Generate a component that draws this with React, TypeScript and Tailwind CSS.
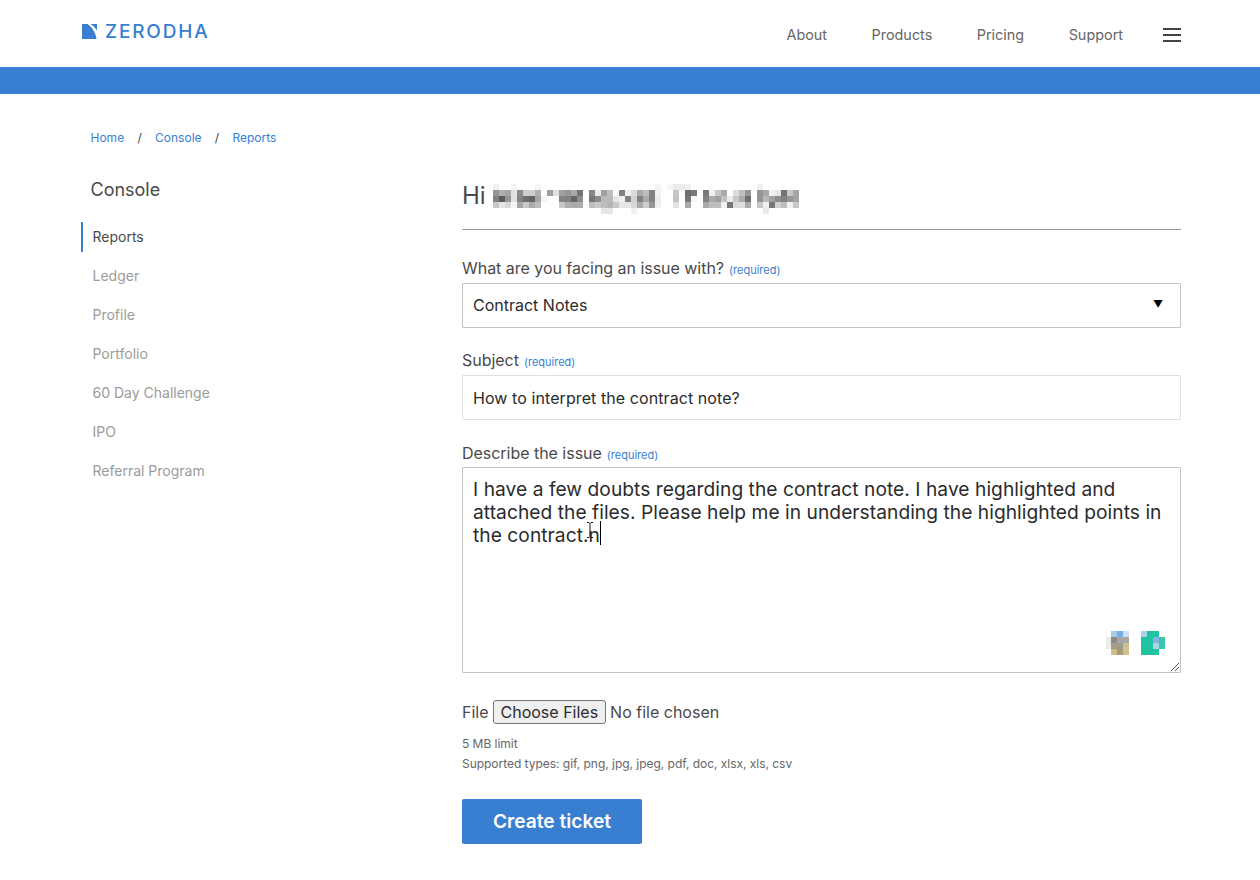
const sideLinks = ['Ledger', 'Profile', 'Portfolio', '60 Day Challenge', 'IPO', 'Referral Program']
const navLinks = ['About', 'Products', 'Pricing', 'Support']

// pixelated name, cells are 6px, values are grey levels (0 = blank)
const blurRows: number[][] = [
  [240,0,0,245,0,0,0,245,0,0,0,0,0,0,0,0,0,0,0,0,0,0,0,0,0,0,0,245,0,245,235,235,240,0,0,0,0,0,0,0,0,0,0,0,240,0,0,0,0,0,0],
  [150,175,165,225,140,205,205,175,0,160,225,160,150,170,115,0,135,235,160,190,0,130,240,220,170,190,130,240,0,0,200,0,110,120,0,120,240,200,170,0,220,190,150,0,150,170,240,230,115,200,165],
  [130,90,150,225,130,110,100,165,245,0,0,130,130,100,140,0,120,140,185,185,230,240,130,210,130,170,130,235,0,0,195,0,120,245,0,130,170,160,195,235,200,170,110,0,150,185,160,140,130,150,165],
  [200,230,215,245,165,200,170,190,0,0,0,200,175,170,175,0,190,200,190,180,200,230,230,215,170,205,150,240,0,0,225,0,170,0,0,170,190,190,240,120,220,220,170,0,200,240,120,210,190,240,200],
  [0,0,0,0,0,0,0,0,0,0,0,0,0,0,0,0,0,0,230,230,0,0,0,240,0,0,0,0,0,0,0,0,0,0,0,0,0,0,0,0,0,0,0,0,0,235,0,0,0,0,0],
]

function NameBlur() {
  return (
    <svg width="306" height="30" viewBox="0 0 306 30" shapeRendering="crispEdges">
      {blurRows.map((row, y) =>
        row.map((v, x) =>
          v ? <rect key={`${x}-${y}`} x={x * 6} y={y * 6} width="6" height="6" fill={`rgb(${v},${v},${v})`} /> : null,
        ),
      )}
    </svg>
  )
}

function Logo() {
  return (
    <div className="flex items-center gap-[8px]">
      <svg width="15" height="15" viewBox="0 0 15 15">
        <path d="M0 0h5.500c4.500 3 8 8.500 9 15H0z" fill="#387ed1" />
        <path d="M8.500 0H15v6.500C13.500 4 11.500 1.800 8.500 0z" fill="#387ed1" />
      </svg>
      <span className="text-[19px] font-medium leading-none tracking-[1.800px] text-[#387ed1]">ZERODHA</span>
    </div>
  )
}

function Label({ text, className }: { text: string; className: string }) {
  return (
    <div className={`flex items-baseline gap-[5px] text-base leading-[22px] tracking-[-0.030px] text-[#4a4a4a] ${className}`}>
      {text}
      <span className="text-[11px] tracking-normal text-[#387ed1]">(required)</span>
    </div>
  )
}

export default function App() {
  return (
    <div className="min-h-[880px] bg-white font-['Inter',sans-serif] text-[#424242]">
      <header className="flex h-[67px] items-center justify-between pl-[82px] pr-[79px]">
        <div className="-mt-[5px]">
          <Logo />
        </div>
        <nav className="flex items-center gap-[44.500px] pt-[3px] text-[14.400px] text-[#666]">
          {navLinks.map((l) => (
            <a key={l}>{l}</a>
          ))}
          <div className="-ml-[4.500px] flex w-[18px] flex-col gap-[4px]">
            <div className="h-[2px] bg-[#424242]" />
            <div className="h-[2px] bg-[#424242]" />
            <div className="h-[2px] bg-[#424242]" />
          </div>
        </nav>
      </header>
      <div className="h-[27px] bg-[#387ed1]" />

      <div className="flex items-center gap-[13.300px] pl-[90.500px] pt-[35px] text-xs leading-[18px]">
        <a className="text-[#387ed1]">Home</a>
        <span>/</span>
        <a className="text-[#387ed1]">Console</a>
        <span>/</span>
        <a className="text-[#387ed1]">Reports</a>
      </div>

      <div className="flex pl-[81px] pt-[30px]">
        <aside className="w-[381px]">
          <h2 className="pl-[9.500px] text-[18px] leading-[26px] text-[#4a4a4a]">Console</h2>
          <div className="mt-[19px] border-l-2 border-[#387ed1] pl-[9.500px] text-sm leading-[30px] text-[#4a4a4a]">Reports</div>
          <ul className="mt-[9px] flex flex-col gap-[9px] pl-[11.500px] text-sm leading-[30px] text-[#9b9b9b]">
            {sideLinks.map((l) => (
              <li key={l}>{l}</li>
            ))}
          </ul>
        </aside>

        <main className="w-[719px] pt-[4px]">
          <div className="flex h-[49px] items-start border-b border-[#9b9b9b]">
            <span className="text-[24px] leading-[30px] text-[#4a4a4a]">Hi</span>
            <span className="ml-[7.500px] mt-[3px]">
              <NameBlur />
            </span>
          </div>

          <div className="mt-[27px]">
            <Label text="What are you facing an issue with?" className="mb-[2px]" />
            <div className="flex h-[45px] items-center justify-between rounded-[1px] border border-[#c4c4c4] pb-[2px] pl-[10px] pr-[17px] text-base text-[#2b2b2b]">
              Contract Notes
              <span className="text-[10px] text-black">▼</span>
            </div>
          </div>

          <div className="mt-[21px]">
            <Label text="Subject" className="mb-[2px]" />
            <div className="flex h-[45px] items-center rounded-[1px] border border-[#e0e0e0] px-[10px] text-base tracking-[0.080px] text-[#2b2b2b]">
              How to interpret the contract note?
            </div>
          </div>

          <div className="mt-[22px]">
            <Label text="Describe the issue" className="mb-[1px]" />
            <div className="relative h-[206px] rounded-[1px] border border-[#c4c4c4] p-[10px] text-[19.200px] leading-[23px] tracking-[0.040px] text-[#2b2b2b]">
              I have a few doubts regarding the contract note. I have highlighted and attached the files. Please help me in understanding the highlighted points in the contract.
              <span className="relative">
                n
                <span className="absolute -right-[1px] -top-[2px] h-[24px] w-px bg-black" />
                <svg className="absolute -left-[3px] -top-[1px]" width="8" height="16" viewBox="0 0 8 16">
                  <path d="M1 .5h2l1 1 1-1h2M4 1.500v13M1 15.500h2l1-1 1 1h2" stroke="#111" strokeWidth="1" fill="none" />
                </svg>
              </span>
              <svg className="absolute bottom-[17px] right-[14px]" width="60" height="24" viewBox="0 0 60 24" shapeRendering="crispEdges">
                <rect x="5" y="0" width="6" height="6" fill="#a8c8ea" />
                <rect x="11" y="0" width="6" height="6" fill="#78aee6" />
                <rect x="17" y="0" width="6" height="6" fill="#cfe0f2" />
                <rect x="0" y="6" width="5" height="12" fill="#ebebe8" />
                <rect x="5" y="6" width="6" height="6" fill="#8a8a88" />
                <rect x="11" y="6" width="12" height="6" fill="#a6a6a4" />
                <rect x="5" y="12" width="6" height="6" fill="#a89c80" />
                <rect x="11" y="12" width="6" height="6" fill="#9a9a90" />
                <rect x="17" y="12" width="6" height="12" fill="#d0bf90" />
                <rect x="5" y="18" width="6" height="6" fill="#d0b98a" />
                <rect x="11" y="18" width="6" height="6" fill="#a89a70" />
                <rect x="35" y="0" width="6" height="6" fill="#acd3ea" />
                <rect x="41" y="0" width="12" height="6" fill="#1fc3a0" />
                <rect x="35" y="6" width="18" height="18" fill="#1fc3a0" />
                <rect x="53" y="6" width="6" height="12" fill="#35c9aa" />
                <rect x="47" y="6" width="6" height="6" fill="#84b2e8" />
                <rect x="47" y="12" width="6" height="6" fill="#acd6e8" />
              </svg>
              <svg className="absolute bottom-0 right-0" width="12" height="12" viewBox="0 0 12 12">
                <path d="M11 3 3 11M11 7 7 11" stroke="#555" strokeWidth="1" fill="none" />
              </svg>
            </div>
          </div>

          <div className="mt-[27px] flex items-center text-base text-[#4a4a4a]">
            <span>File</span>
            <span className="ml-[4px] rounded-[3px] border border-[#767676] bg-[#efefef] px-[7px] leading-[22px] text-[#2b2b2b]">Choose Files</span>
            <span className="ml-[4px]">No file chosen</span>
          </div>

          <div className="mt-[10px] text-xs leading-[20px] tracking-[-0.030px] text-[#666]">
            <div>5 MB limit</div>
            <div>Supported types: gif, png, jpg, jpeg, pdf, doc, xlsx, xls, csv</div>
          </div>

          <button className="mt-[25px] h-[45px] w-[180px] rounded-[2px] bg-[#387ed1] text-[19.200px] font-semibold text-white">
            Create ticket
          </button>
        </main>
      </div>
    </div>
  )
}
